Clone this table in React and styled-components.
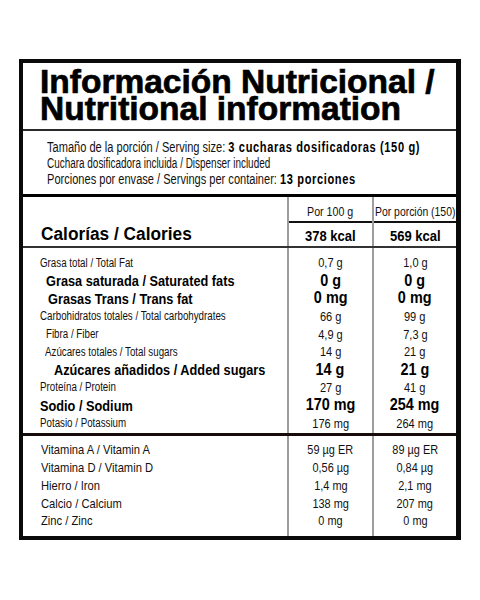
import styled, { createGlobalStyle } from "styled-components";

const GlobalStyle = createGlobalStyle`
  body {
    margin: 0;
    background: #fff;
    color: #111;
    font-family: "Liberation Sans", Arial, sans-serif;
  }
`;

const Page = styled.div`
  padding: 59px 0 40px 19px;
`;

const Panel = styled.div`
  width: 433px;
  border: 4px solid #0a0a0a;
  border-right-width: 5px;
`;

const Title = styled.h1`
  margin: 0;
  padding: 5px 0 7px 17px;
  font-size: 33.5px;
  line-height: 27px;
  font-weight: 700;
  color: #000;
  -webkit-text-stroke: 0.7px #000;
  border-bottom: 2px solid #2a2a2a;
`;

const Serving = styled.div`
  padding: 8px 0 7px 24px;
  border-bottom: 3px solid #000;
`;

const ServingLine = styled.div`
  height: 16px;
  display: flex;
  align-items: center;
  font-size: 14px;
  line-height: 1;
`;

// condensed look: the label font is a narrow grotesque, squeeze Liberation Sans
const Squeeze = styled.span`
  display: inline-block;
  white-space: nowrap;
  transform: scaleX(${(p) => p.$sx || 1});
  transform-origin: ${(p) => (p.$center ? "center" : "left")} center;
`;

const Strong = styled.b`
  font-weight: 700;
  letter-spacing: 0.8px;
  color: #000;
`;

const Section = styled.div`
  display: flex;
  border-bottom: ${(p) => p.$rule || "none"};
`;

const Col = styled.div`
  box-sizing: border-box;
  width: ${(p) => p.$w}px;
  padding: ${(p) => p.$pad || "0"};
  border-left: ${(p) => (p.$divided ? "2px solid #9d9d9d" : "none")};
  display: flex;
  flex-direction: column;
`;

const CaloriesLabel = styled.div`
  flex: 1;
  display: flex;
  align-items: flex-end;
  padding: 0 0 2px 18px;
  font-size: 18px;
  line-height: 20px;
  font-weight: 700;
  color: #000;
`;

const HeadCell = styled.div`
  box-sizing: border-box;
  height: 26px;
  padding-top: 5px;
  display: flex;
  justify-content: center;
  align-items: center;
  font-size: 13px;
  line-height: 1;
  border-bottom: 2px solid #111;
`;

const KcalCell = styled.div`
  box-sizing: border-box;
  height: 23px;
  padding-top: 3px;
  display: flex;
  justify-content: center;
  align-items: center;
  font-size: 14px;
  line-height: 1;
  font-weight: 700;
  color: #000;
`;

const Cell = styled.div`
  height: ${(p) => p.$h}px;
  display: flex;
  align-items: center;
  justify-content: ${(p) => (p.$center ? "center" : "flex-start")};
  padding-left: ${(p) => p.$indent || 0}px;
  font-size: ${(p) => p.$size}px;
  font-weight: ${(p) => (p.$bold ? 700 : 400)};
  color: ${(p) => (p.$bold ? "#000" : "#111")};
  line-height: 1;
`;

const nutrients = [
  { label: "Grasa total / Total Fat", a: "0,7 g", b: "1,0 g", indent: 17 },
  { label: "Grasa saturada / Saturated fats", a: "0 g", b: "0 g", bold: true, indent: 23 },
  { label: "Grasas Trans / Trans fat", a: "0 mg", b: "0 mg", bold: true, indent: 25 },
  { label: "Carbohidratos totales / Total carbohydrates", a: "66 g", b: "99 g", indent: 17 },
  { label: "Fibra / Fiber", a: "4,9 g", b: "7,3 g", indent: 23 },
  { label: "Azúcares totales / Total sugars", a: "14 g", b: "21 g", indent: 22 },
  { label: "Azúcares añadidos / Added sugars", a: "14 g", b: "21 g", bold: true, indent: 31 },
  { label: "Proteína / Protein", a: "27 g", b: "41 g", indent: 17 },
  { label: "Sodio / Sodium", a: "170 mg", b: "254 mg", bold: true, indent: 17 },
  { label: "Potasio / Potassium", a: "176 mg", b: "264 mg", indent: 17 },
];

const vitamins = [
  { label: "Vitamina A / Vitamin A", a: "59 µg ER", b: "89 µg ER" },
  { label: "Vitamina D / Vitamin D", a: "0,56 µg", b: "0,84 µg" },
  { label: "Hierro / Iron", a: "1,4 mg", b: "2,1 mg" },
  { label: "Calcio / Calcium", a: "138 mg", b: "207 mg" },
  { label: "Zinc / Zinc", a: "0 mg", b: "0 mg" },
];

const WIDTHS = [264, 85, 84];

function NutrientLabel({ row }) {
  return (
    <Cell $h={17.8} $indent={row.indent} $size={row.bold ? 15 : 12.5} $bold={row.bold}>
      <Squeeze $sx={row.bold ? 0.85 : 0.78}>{row.label}</Squeeze>
    </Cell>
  );
}

function NutrientValue({ row, value }) {
  return (
    <Cell $h={17.8} $center $size={row.bold ? 16 : 13} $bold={row.bold}>
      <Squeeze $center $sx={row.bold ? 0.9 : 0.85}>{value}</Squeeze>
    </Cell>
  );
}

export default function App() {
  return (
    <Page>
      <GlobalStyle />
      <Panel>
        <Title>
          Información Nutricional /
          <br />
          Nutritional information
        </Title>

        <Serving>
          <ServingLine>
            <Squeeze $sx={0.79}>
              Tamaño de la porción / Serving size: <Strong>3 cucharas dosificadoras (150 g)</Strong>
            </Squeeze>
          </ServingLine>
          <ServingLine>
            <Squeeze $sx={0.71}>Cuchara dosificadora incluida / Dispenser included</Squeeze>
          </ServingLine>
          <ServingLine>
            <Squeeze $sx={0.79}>
              Porciones por envase / Servings per container: <Strong>13 porciones</Strong>
            </Squeeze>
          </ServingLine>
        </Serving>

        <Section $rule="2px solid #333">
          <Col $w={WIDTHS[0]}>
            <CaloriesLabel>
              <Squeeze $sx={0.96}>Calorías / Calories</Squeeze>
            </CaloriesLabel>
          </Col>
          <Col $w={WIDTHS[1]} $divided>
            <HeadCell>
              <Squeeze $center $sx={0.82}>Por 100 g</Squeeze>
            </HeadCell>
            <KcalCell>
              <Squeeze $center $sx={0.93}>378 kcal</Squeeze>
            </KcalCell>
          </Col>
          <Col $w={WIDTHS[2]} $divided>
            <HeadCell>
              <Squeeze $center $sx={0.8}>Por porción (150)</Squeeze>
            </HeadCell>
            <KcalCell>
              <Squeeze $center $sx={0.93}>569 kcal</Squeeze>
            </KcalCell>
          </Col>
        </Section>

        <Section $rule="3px solid #160c0c">
          <Col $w={WIDTHS[0]} $pad="6px 0 1px">
            {nutrients.map((row) => (
              <NutrientLabel key={row.label} row={row} />
            ))}
          </Col>
          <Col $w={WIDTHS[1]} $pad="6px 0 1px" $divided>
            {nutrients.map((row) => (
              <NutrientValue key={row.label} row={row} value={row.a} />
            ))}
          </Col>
          <Col $w={WIDTHS[2]} $pad="6px 0 1px" $divided>
            {nutrients.map((row) => (
              <NutrientValue key={row.label} row={row} value={row.b} />
            ))}
          </Col>
        </Section>

        <Section>
          <Col $w={WIDTHS[0]} $pad="5px 0 6.25px">
            {vitamins.map((row) => (
              <Cell key={row.label} $h={17.75} $indent={18} $size={13}>
                <Squeeze $sx={0.86}>{row.label}</Squeeze>
              </Cell>
            ))}
          </Col>
          <Col $w={WIDTHS[1]} $pad="5px 0 6.25px" $divided>
            {vitamins.map((row) => (
              <Cell key={row.label} $h={17.75} $center $size={13}>
                <Squeeze $center $sx={0.84}>{row.a}</Squeeze>
              </Cell>
            ))}
          </Col>
          <Col $w={WIDTHS[2]} $pad="5px 0 6.25px" $divided>
            {vitamins.map((row) => (
              <Cell key={row.label} $h={17.75} $center $size={13}>
                <Squeeze $center $sx={0.84}>{row.b}</Squeeze>
              </Cell>
            ))}
          </Col>
        </Section>
      </Panel>
    </Page>
  );
}
